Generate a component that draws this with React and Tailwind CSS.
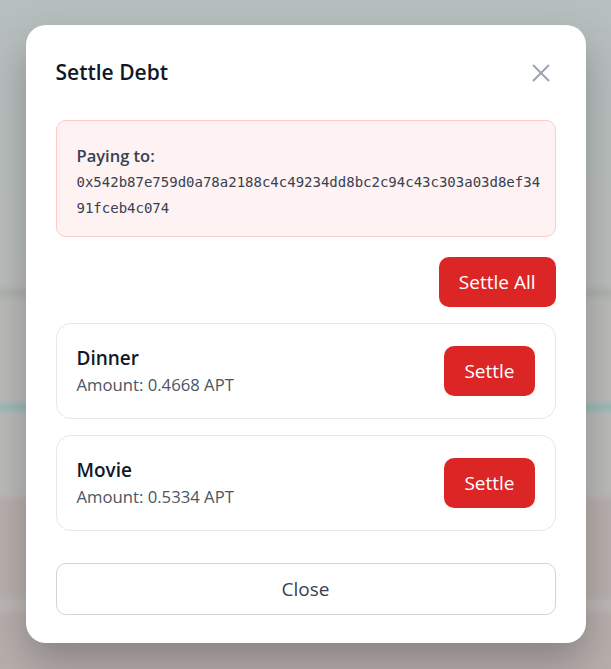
import React from 'react';

const debts = [
  { id: 1, title: 'Dinner', amount: '0.4668' },
  { id: 2, title: 'Movie', amount: '0.5334' },
];

const address = '0x542b87e759d0a78a2188c4c49234dd8bc2c94c43c303a03d8ef3491fceb4c074';

const Backdrop = () => (
  <div className="absolute inset-0 overflow-hidden">
    <div className="flex flex-col h-full blur-[3px] scale-105">
      <div className="h-[290px] bg-gradient-to-b from-[#b6bfbe] to-[#babdbb]"></div>
      <div className="h-[10px] bg-[#aeb1ae]"></div>
      <div className="h-[100px] bg-[#bbbcba]"></div>
      <div className="h-[8px] bg-[#95b8b3]"></div>
      <div className="h-[80px] bg-[#bbbcba]"></div>
      <div className="h-[100px] bg-[#b9b0ae]"></div>
      <div className="h-[10px] bg-[#bcb8b6]"></div>
      <div className="flex-1 bg-[#b8afad]"></div>
    </div>
  </div>
);

const App = () => {
  return (
    <div
      className="relative h-[669px] overflow-hidden"
      style={{ fontFamily: '"Open Sans", "Noto Sans", sans-serif' }}
    >
      <Backdrop />
      <div className="relative flex justify-center pt-[25px]">
        <div className="w-[560px] bg-white rounded-[20px] p-[30px] pb-[28px] shadow-[0_20px_40px_rgba(0,0,0,0.25)]">
          <div className="flex items-center justify-between h-9">
            <h2 className="text-[21px] font-semibold text-[#111827]">Settle Debt</h2>
            <button type="button" className="text-[#9ca3af]">
              <svg className="w-[30px] h-[30px]" viewBox="0 0 24 24" fill="none" stroke="currentColor">
                <path strokeLinecap="round" strokeLinejoin="round" strokeWidth={1.5} d="M6 18L18 6M6 6l12 12" />
              </svg>
            </button>
          </div>

          <div className="mt-[29px] rounded-[10px] border border-[#fecaca] bg-[#fef2f2] pl-5 pr-3 pt-[22px] pb-[15px]">
            <p className="text-[16.5px] leading-[25px] font-semibold text-[#374151]">Paying to:</p>
            <p
              className="mt-[2px] text-[14px] leading-[25.5px] text-[#374151] break-all"
              style={{ fontFamily: '"DejaVu Sans Mono", "Liberation Mono", monospace' }}
            >
              {address}
            </p>
          </div>

          <div className="mt-5 flex justify-end">
            <button type="button" className="h-[50px] px-5 rounded-[10px] bg-[#dc2626] text-white text-[19px] font-medium">
              Settle All
            </button>
          </div>

          <div className="mt-4 flex flex-col gap-4">
            {debts.map((debt) => (
              <div
                key={debt.id}
                className="flex items-center justify-between rounded-[15px] border border-[#e5e7eb] px-5 py-[21px]"
              >
                <div>
                  <p className="text-[19px] leading-[27px] font-semibold text-[#111827]">{debt.title}</p>
                  <p className="text-[16.7px] leading-[25px] text-[#4b5563]">Amount: {debt.amount} APT</p>
                </div>
                <button type="button" className="h-[50px] px-5 rounded-[10px] bg-[#dc2626] text-white text-[19px] font-medium">
                  Settle
                </button>
              </div>
            ))}
          </div>

          <button
            type="button"
            className="mt-8 w-full h-[52px] rounded-[10px] border border-[#d1d5db] text-[19px] text-[#374151]"
          >
            Close
          </button>
        </div>
      </div>
    </div>
  );
};

export default App;
